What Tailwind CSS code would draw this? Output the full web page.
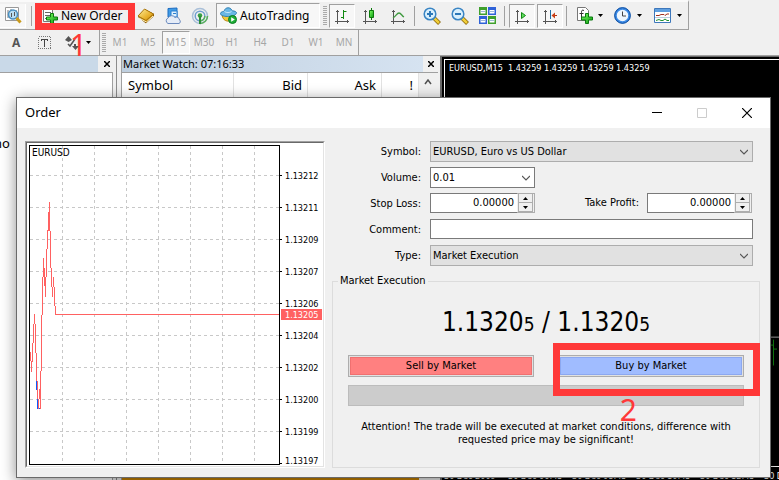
<!DOCTYPE html>
<html lang="en">
<head>
<meta charset="utf-8">
<title>Order</title>
<script src="https://cdn.jsdelivr.net/npm/@tailwindcss/browser@4"></script>
</head>
<body class="relative flex h-screen flex-col overflow-hidden bg-[#f0f0f0] font-['Noto_Sans','Open_Sans',sans-serif] text-[11px] text-black">

<svg class="absolute size-0" aria-hidden="true">
  <defs>
    <symbol id="axes" viewBox="0 0 16 16"><path d="M3.500 2v14M1 13.500h14M2 3.500h3M13.500 12v3" stroke="#555" fill="none"/></symbol>
    <symbol id="drop" viewBox="0 0 5 3"><path d="M0 0h5L2.500 3z"/></symbol>
    <linearGradient id="gold" x1="0" y1="0" x2="1" y2="1"><stop offset="0" stop-color="#fff0a0"/><stop offset=".6" stop-color="#e9b32e"/><stop offset="1" stop-color="#c98a10"/></linearGradient>
    <linearGradient id="green" x1="0" y1="0" x2="1" y2="1"><stop offset="0" stop-color="#7dff60"/><stop offset="1" stop-color="#0a9a12"/></linearGradient>
  </defs>
</svg>

<header>
  <nav aria-label="Main toolbar" class="flex h-[30px] w-[689px] items-center border-t-2 border-r border-b border-t-[#fafafa] border-r-[#a0a0a0] border-b-[#a0a0a0]">
    <button aria-label="Data window" class="flex h-6 w-[26px] items-center justify-center border-r border-b border-white bg-[#f7f7f7]">
      <svg class="size-[18px]" viewBox="0 0 18 18"><path d="M1.500 1.500h13v13h-13z" fill="#fff" stroke="#999"/><path d="M4 4v8M7 3v3M12 4v3" stroke="#777"/><circle cx="9" cy="8.500" r="4.500" fill="#b9def3" stroke="#4a8fc0" stroke-width="1.500"/><path d="M7.500 7v4M10.500 6v4" stroke="#555"/><path d="m12.500 12 4 4.500" stroke="#c99a1c" stroke-width="3"/></svg>
    </button>
    <span class="ml-[5px] h-5 w-px bg-[#a0a0a0]"></span>
    <button class="relative ml-2 flex h-6 w-[88px] items-center gap-[3px] pl-[2px] text-[12px]">
      <svg class="size-4 shrink-0" viewBox="0 0 16 16"><path d="M1.500 1.500h9v12h-9z" fill="#fff" stroke="#777"/><path d="M1 1.500h10" stroke="#555"/><path d="M3 4.500h6M3 7.500h5M3 10.500h4" stroke="#666"/><path d="M8.500 5.500h3v3.500h4v3h-4v3.500h-3V12h-4V9h4z" fill="url(#green)" stroke="#0a7a10"/></svg>
      <span class="whitespace-nowrap">New Order</span>
      <span class="pointer-events-none absolute -top-px -right-[7px] -left-[5px] h-[27px] border-[7px] border-[#ff3838]"></span>
      <span class="pointer-events-none absolute top-[18px] left-[30px] z-10 text-[30px] text-[#ff3838]">1</span>
    </button>
    <button aria-label="Terminal" class="ml-[9px] size-[18px]"><svg viewBox="0 0 18 18"><path d="m1 9.500 8 6.500 7.500-7v-2l-8-4z" fill="#c98d10" stroke="#8a5a06"/><path d="m2 11 7.500 4 6.500-6" fill="none" stroke="#fff3c0"/><path d="M1 9 7.500 2l9 5L9 13.500z" fill="url(#gold)" stroke="#a8750c"/></svg></button>
    <button aria-label="Cloud" class="ml-[9px] size-[18px]"><svg viewBox="0 0 18 18"><path d="M4 1.500 13 1v9H4z" fill="#3f9be6" stroke="#1d6cc0"/><path d="M7 4h6v6H7z" fill="#dff0fd" stroke="#2b7fd0"/><path d="M9 6.500h3" stroke="#2b7fd0"/><path d="M4 16.500a3 3 0 0 1 0-5.500 4 4 0 0 1 7-.5 3 3 0 0 1 4.500 2.500 2 2 0 0 1-.5 3.500z" fill="#e5ecf7" stroke="#6a89bd"/></svg></button>
    <button aria-label="Signals" class="ml-[9px] size-[18px]"><svg viewBox="0 0 18 18" fill="none"><circle cx="9" cy="9" r="7.500" stroke="#a9bfd8" stroke-width="1.500"/><circle cx="9" cy="9" r="4.800" stroke="#6f9fd0" stroke-width="1.500"/><path d="M9 16.500A7.500 7.500 0 0 0 16.500 9M9 13.800A4.800 4.800 0 0 0 13.800 9" stroke="#58b05a" stroke-width="1.500"/><circle cx="9" cy="8.500" r="2.300" fill="#39a045"/><path d="M9 9v8" stroke="#2c8c3a" stroke-width="2"/></svg></button>
    <button class="ml-[7px] flex h-[25px] w-[104px] items-center gap-[3px] border border-t-[#a0a0a0] border-r-white border-b-white border-l-[#a0a0a0] bg-[#f7f7f7] pl-[3px] text-[12px]">
      <svg class="size-[17px] shrink-0" viewBox="0 0 17 17"><path d="M2 8c1 8 10 8 13 1z" fill="#f3c93d" stroke="#b88a13"/><path d="M.5 6.500C1 4 4 5 4.500 3.500 5 0 11 0 11.500 3c1 1.500 4 .5 5 2.500 0 3-5 4-8 4s-8-.5-8-3z" fill="#6bb8e6" stroke="#2e7fb4"/><path d="M4.500 4.500c2 1.500 5 1.500 7 0" fill="none" stroke="#c8e8fa"/><circle cx="12.500" cy="12.500" r="4" fill="#1fae38" stroke="#0b7d20"/><path d="M11.200 10.300v4.400l3.600-2.200z" fill="#fff"/></svg>
      <span>AutoTrading</span>
    </button>
    <span class="ml-[3px] h-5 w-1 bg-[repeating-linear-gradient(#aaa_0_1px,#f0f0f0_1px_2px)]"></span>
    <button aria-label="Bar chart" class="ml-[2px] flex h-6 w-[26px] items-center justify-center border border-t-[#a0a0a0] border-r-white border-b-white border-l-[#a0a0a0] bg-[#f7f7f7]"><svg class="size-4" viewBox="0 0 16 16"><use href="#axes"/><path d="M9.500 2v9M7 9.500h2M10 3.500h2.500" stroke="#128a12"/></svg></button>
    <button aria-label="Candlesticks" class="ml-[7px] size-4"><svg viewBox="0 0 16 16"><use href="#axes"/><path d="M9.500 0v12" stroke="#0a7a0a"/><path d="M7.500 2.500h4v7h-4z" fill="url(#green)" stroke="#0a7a0a"/></svg></button>
    <button aria-label="Line chart" class="ml-3 size-4"><svg viewBox="0 0 16 16"><use href="#axes"/><path d="M3 10c3-2 4-5 6-5s3 3 5 4" fill="none" stroke="#3f9a3f" stroke-width="1.300"/></svg></button>
    <span class="ml-[8px] h-5 w-px bg-[#a0a0a0]"></span>
    <button aria-label="Zoom in" class="ml-2 size-[18px]"><svg viewBox="0 0 18 18"><path d="m11 11 5.500 5.500" stroke="#8a6508" stroke-width="4"/><path d="m11 11 5 5" stroke="#f0cf3a" stroke-width="2.500"/><circle cx="7" cy="7" r="5.800" fill="#d9f0fd" stroke="#3a85c4" stroke-width="1.500"/><path d="M7 4v6M4 7h6" stroke="#2c78b8" stroke-width="2"/></svg></button>
    <button aria-label="Zoom out" class="ml-[10px] size-[18px]"><svg viewBox="0 0 18 18"><path d="m11 11 5.500 5.500" stroke="#8a6508" stroke-width="4"/><path d="m11 11 5 5" stroke="#f0cf3a" stroke-width="2.500"/><circle cx="7" cy="7" r="5.800" fill="#d9f0fd" stroke="#3a85c4" stroke-width="1.500"/><path d="M4 7h6" stroke="#2c78b8" stroke-width="2"/></svg></button>
    <button aria-label="Tile windows" class="ml-[10px] size-[17px]"><svg viewBox="0 0 17 17"><path d="M0 0h8v8H0z" fill="#3fa02c"/><path d="M9 0h8v8H9z" fill="#2f62d8"/><path d="M0 9h8v8H0z" fill="#2f62d8"/><path d="M9 9h8v8H9z" fill="#3fa02c"/><path d="M1.500 3h5v3.500h-5zM10.500 3h5v3.500h-5zM1.500 12h5v3.500h-5zM10.500 12h5v3.500h-5z" fill="#fff"/><path d="M2 4.500h4M11 4.500h4M2 13.500h4M11 13.500h4" stroke="#9fb8d8"/></svg></button>
    <span class="ml-[8px] h-5 w-px bg-[#a0a0a0]"></span>
    <button aria-label="Auto scroll" class="ml-1 flex h-6 w-[26px] items-center justify-center border border-t-[#a0a0a0] border-r-white border-b-white border-l-[#a0a0a0] bg-[#f7f7f7]"><svg class="size-4" viewBox="0 0 16 16"><use href="#axes"/><path d="M7.500 4.500v6l4-3z" fill="#5fdc5f" stroke="#128a12"/></svg></button>
    <button aria-label="Chart shift" class="ml-[2px] flex h-6 w-[26px] items-center justify-center border border-t-[#a0a0a0] border-r-white border-b-white border-l-[#a0a0a0] bg-[#f7f7f7]"><svg class="size-4" viewBox="0 0 16 16"><use href="#axes"/><path d="M8.500 2v9" stroke="#1a6fa8"/><path d="M10 7.500h5" stroke="#b03010"/><path d="m9.500 7.500 3.500-3v6z" fill="#c84018"/></svg></button>
    <span class="ml-[3px] h-5 w-px bg-[#a0a0a0]"></span>
    <button aria-label="Indicators" class="ml-[9px] flex items-center gap-[5px]"><svg class="size-[17px]" viewBox="0 0 17 17"><path d="M1.500.5h8l3 3v10h-11z" fill="#fff" stroke="#777"/><path d="M8 3.500c-2-1-2.500 0-2.500 2V11M3.500 6.500h4" fill="none" stroke="#333"/><path d="M9.500 6.500h3v3.500h4v3h-4v3.500h-3V13h-4v-3h4z" fill="url(#green)" stroke="#0a7a10"/></svg><svg class="h-[3px] w-[5px]"><use href="#drop"/></svg></button>
    <button aria-label="Periods" class="ml-[11px] flex items-center gap-[6px]"><svg class="size-[17px]" viewBox="0 0 17 17"><circle cx="8.500" cy="8.500" r="7" fill="#eef6fd" stroke="#3b8ae6" stroke-width="2.500"/><circle cx="8.500" cy="8.500" r="7.800" fill="none" stroke="#134f9c"/><path d="M8.500 4.500v4.500h3.500" fill="none" stroke="#444"/></svg><svg class="h-[3px] w-[5px]"><use href="#drop"/></svg></button>
    <button aria-label="Templates" class="ml-[12px] flex items-center gap-[6px]"><svg class="h-[15px] w-[17px]" viewBox="0 0 17 15"><path d="M.5.5h16v14H.5z" fill="#fff" stroke="#3d77bb"/><path d="M1 1h15v3H1z" fill="#5f9fe0"/><path d="M2 7.500h3l2-1h3l1 1 2-1.500h2" fill="none" stroke="#a03020"/><path d="M1 9.500h15" stroke="#bcd"/><path d="m2 12.500 3-1 2 1h2l2-1.500 2 1.500h2" fill="none" stroke="#209030"/></svg><svg class="h-[3px] w-[5px]"><use href="#drop"/></svg></button>
  </nav>
  <nav aria-label="Timeframes" class="flex h-[26px] items-center border-b border-[#a0a0a0] text-[10px] text-[#a6a6a6]">
    <div class="flex h-full w-[100px] items-center border-r border-[#a0a0a0]">
      <button class="ml-3 text-[12px] font-bold text-[#555]">A</button>
      <button aria-label="Text label" class="ml-[18px] size-[13px]"><svg viewBox="0 0 13 13" shape-rendering="crispEdges"><rect x=".5" y=".5" width="12" height="12" fill="none" stroke="#777" stroke-dasharray="1 1"/><path d="M3 3.500h7M6.500 3v8M3.500 3v2M9.500 3v2" stroke="#444" fill="none"/></svg></button>
      <button aria-label="Arrows" class="ml-[14px] flex items-center gap-[7px] text-black"><svg class="size-[14px]" viewBox="0 0 14 14"><path d="m0 4 3.500-4L7 4 3.500 6zM7 10h2V8h2v2h3l-3.500 4z" fill="#555"/><path d="m3 8 2 2 5-7" fill="none" stroke="#555" stroke-width="1.500"/></svg><svg class="h-[3px] w-[5px]"><use href="#drop"/></svg></button>
    </div>
    <span class="ml-[2px] h-5 w-1 bg-[repeating-linear-gradient(#aaa_0_1px,#f0f0f0_1px_2px)]"></span>
    <div class="flex h-full items-center border-r border-[#a0a0a0]">
      <button class="h-[23px] w-7">M1</button><button class="h-[23px] w-7">M5</button><button class="h-[23px] w-7 border border-t-[#a0a0a0] border-r-white border-b-white border-l-[#a0a0a0] bg-[#f7f7f7]">M15</button><button class="h-[23px] w-7">M30</button><button class="h-[23px] w-7">H1</button><button class="h-[23px] w-7">H4</button><button class="h-[23px] w-7">D1</button><button class="h-[23px] w-7">W1</button><button class="h-[23px] w-7">MN</button>
    </div>
  </nav>
</header>

<main class="flex min-h-0 flex-1">
  <aside class="flex w-[117px] flex-col border-r border-[#8c8c8c]">
    <div class="flex h-4 items-center bg-[#c9d9e8]">
      <span class="flex-1"></span>
      <button aria-label="Close navigator" class="flex h-full w-[18px] items-center justify-center bg-[#f0f0f0]"><svg class="size-[6px]" viewBox="0 0 6 6"><path d="m0 0 6 6M6 0 0 6" stroke="#000" stroke-width="1.500"/></svg></button>
    </div>
    <div class="mr-[3px] flex-1 border-t border-r border-[#a0a0a0] bg-white pt-[61px] text-[13px]"><span class="-ml-[6px]">no</span></div>
  </aside>
  <section aria-label="Market Watch" class="ml-1 flex w-[317px] flex-col border-l border-[#a0a0a0]">
    <div class="flex h-4 items-center bg-linear-to-r from-[#bfcfdf] to-[#d7e4f2]">
      <h2 class="flex-1 pl-px text-[11px] leading-4">Market Watch: 07:16:33</h2>
      <button aria-label="Close market watch" class="flex h-full w-[15px] items-center justify-center bg-[#f0f0f0]"><svg class="size-[6px]" viewBox="0 0 6 6"><path d="m0 0 6 6M6 0 0 6" stroke="#000" stroke-width="1.500"/></svg></button>
    </div>
    <div class="flex flex-1 border-t border-[#a0a0a0]">
      <div class="flex-1 bg-[#c98300]">
        <table class="w-full table-fixed border-collapse bg-white text-[13px] leading-6">
          <thead><tr class="h-6">
            <th class="border-r border-[#e2e2e2] pl-[6px] text-left font-normal">Symbol</th>
            <th class="w-[74px] border-r border-[#e2e2e2] pr-[5px] text-right font-normal">Bid</th>
            <th class="w-[74px] border-r border-[#e2e2e2] pr-[5px] text-right font-normal">Ask</th>
            <th class="w-[37px] border-r border-[#e2e2e2] pr-[5px] text-right font-normal">!</th>
          </tr></thead>
        </table>
      </div>
      <div class="w-[19px] bg-[#f0f0f0] pt-[6px]"><svg class="ml-[5px] h-[6px] w-2" viewBox="0 0 8 6"><path d="m1 5 3-4 3 4" fill="none" stroke="#505050" stroke-width="1.500"/></svg></div>
    </div>
  </section>
  <section aria-label="EURUSD chart" class="ml-[2px] flex min-w-0 flex-1 flex-col border-t border-l-2 border-[#696969] bg-black pt-[2px] pl-[2px] font-['DejaVu_Sans_Condensed','DejaVu_Sans',sans-serif] text-[9px] text-white">
    <div class="relative h-[408px] border-y border-l border-white px-1">
      <p class="leading-[16px] whitespace-pre">EURUSD,M15  1.43259 1.43259 1.43259 1.43259</p>
      <svg class="absolute top-0 right-0 h-full w-[9px]" viewBox="0 0 9 408"><path d="M0 278.500h9" stroke="#aaa"/><path d="M3.500 281v26M1 286.500h2M4 290.500h3" stroke="#128a12"/></svg>
    </div>
    <div class="flex h-[13px] overflow-hidden pt-[5px] leading-[9px] whitespace-nowrap">
      <span class="w-16 shrink-0">30 Dec 2009</span><span class="w-16 shrink-0">30 Dec 06:45</span><span class="w-16 shrink-0">30 Dec 08:45</span><span class="w-16 shrink-0">30 Dec 10:45</span><span class="w-16 shrink-0">30 Dec 12:45</span><span class="w-16 shrink-0">30 Dec 14:45</span>
    </div>
  </section>
</main>

<div role="dialog" aria-labelledby="dlg" class="absolute top-[97px] right-2 left-4 z-20 border border-[#6a6a6a] bg-[#f0f0f0] shadow-[0_3px_14px_rgba(0,0,0,0.45)]">
  <div class="flex h-[30px] items-center bg-white pl-2">
    <h1 id="dlg" class="flex-1 text-[13px]">Order</h1>
    <button aria-label="Minimize" class="flex w-[45px] justify-center"><svg class="size-[10px]" viewBox="0 0 10 10"><path d="M0 4.500h10" stroke="#000"/></svg></button>
    <button aria-label="Maximize" disabled class="flex w-[45px] justify-center"><svg class="size-[10px]" viewBox="0 0 10 10"><path d="M.5.5h9v9h-9z" fill="none" stroke="#ccc"/></svg></button>
    <button aria-label="Close" class="flex w-[46px] justify-center"><svg class="size-[10px]" viewBox="0 0 10 10"><path d="m0 0 10 10M10 0 0 10" stroke="#000" stroke-width="1.200"/></svg></button>
  </div>
  <div class="flex gap-[7px] pt-[13px] pr-[10px] pb-[9px] pl-2">
    <div class="h-[327px] w-[300px] shrink-0 border border-t-[#a0a0a0] border-r-white border-b-white border-l-[#a0a0a0]">
      <div class="h-full border border-t-[#696969] border-r-[#e3e3e3] border-b-[#e3e3e3] border-l-[#696969] bg-white">
        <svg class="h-full w-full font-['DejaVu_Sans_Condensed','DejaVu_Sans',sans-serif]" viewBox="27 143 296 323" role="img" aria-label="EURUSD tick chart">
          <g shape-rendering="crispEdges" fill="none">
            <path d="M62.500 146v318M94.500 146v318M126.500 146v318M158.500 146v318M190.500 146v318M222.500 146v318M254.500 146v318M30 175.500h249M30 207.500h249M30 239.500h249M30 271.500h249M30 303.500h249M30 335.500h249M30 367.500h249M30 399.500h249M30 431.500h249" stroke="#c8c8c8" stroke-dasharray="3 3"/>
            <path d="M279 175.500h3M279 207.500h3M279 239.500h3M279 271.500h3M279 303.500h3M279 335.500h3M279 367.500h3M279 399.500h3M279 431.500h3M279 463.500h3" stroke="#000"/>
            <path d="M30.500 352v9M31.500 361v11M32.500 343v19M33.500 324v19M34.500 314v10M35.500 324v29M36.500 353v28M37.500 381v18M38.500 399v10M39.500 389v10M40.500 371v38M41.500 315v56M42.500 277v38M43.500 258v19M44.500 268v18M45.500 277v20M46.500 249v28M47.500 230v19M48.500 212v19M49.500 202v29M50.500 231v37M51.500 268v19M52.500 287v10M53.500 277v10M54.500 287v19M55.500 306v9M56 314.500h223" stroke="#ff6161"/>
            <path d="M36.500 381v9M37.500 399v10M39 408.500h1" stroke="#0a5cff"/>
            <path d="M29.500 145.500h250v319h-250z" stroke="#000"/>
          </g>
          <text x="32" y="156" font-size="10">EURUSD</text>
          <rect x="281" y="309" width="41" height="11" fill="#ff6161"/>
          <g font-size="9">
            <text x="285" y="179">1.13212</text><text x="285" y="211">1.13211</text><text x="285" y="243">1.13209</text><text x="285" y="275">1.13207</text><text x="285" y="307">1.13206</text><text x="285" y="318" fill="#fff">1.13205</text><text x="285" y="339">1.13204</text><text x="285" y="371">1.13202</text><text x="285" y="403">1.13200</text><text x="285" y="435">1.13199</text><text x="285" y="464">1.13197</text>
          </g>
        </svg>
      </div>
    </div>
    <form class="flex min-w-0 flex-1 flex-col font-['DejaVu_Sans_Condensed','DejaVu_Sans',sans-serif]">
      <div class="grid grid-cols-[89px_1fr] items-center gap-x-[9px] gap-y-[5px] pr-[7px] [&>label]:pt-[2px] [&>label]:text-right">
        <label for="symbol">Symbol:</label>
        <div class="relative"><select id="symbol" class="h-[21px] w-full appearance-none border border-[#adadad] bg-[#e1e1e1] pt-[2px] pl-[2px]"><option>EURUSD, Euro vs US Dollar</option></select><svg class="pointer-events-none absolute top-2 right-[5px] h-[6px] w-2" viewBox="0 0 8 6"><path d="m0 1 4 4 4-4" fill="none" stroke="#555" stroke-width="1.200"/></svg></div>
        <label for="volume">Volume:</label>
        <div class="relative w-[105px]"><select id="volume" class="h-[21px] w-full appearance-none border border-[#7a7a7a] bg-white pt-[2px] pl-[2px]"><option>0.01</option></select><svg class="pointer-events-none absolute top-2 right-[5px] h-[6px] w-2" viewBox="0 0 8 6"><path d="m0 1 4 4 4-4" fill="none" stroke="#555" stroke-width="1.200"/></svg></div>
        <label for="sl">Stop Loss:</label>
        <div class="flex h-[21px] items-start justify-between">
          <div class="flex h-5 w-[105px]"><input id="sl" value="0.00000" class="w-[87px] border border-r-0 border-[#7a7a7a] bg-white pt-px pr-[3px] text-right"><span class="flex flex-1 flex-col border border-l-0 border-[#adadad] bg-[#f0f0f0] pr-px pl-px"><button type="button" aria-label="Increase stop loss" class="flex flex-1 items-center justify-center border border-t-0 border-[#adadad]"><svg class="h-[3px] w-[5px] rotate-180"><use href="#drop"/></svg></button><button type="button" aria-label="Decrease stop loss" class="flex flex-1 items-center justify-center border border-t-0 border-[#adadad]"><svg class="h-[3px] w-[5px]"><use href="#drop"/></svg></button></span></div>
          <div class="flex items-center gap-2 pr-px"><label for="tp" class="pt-px">Take Profit:</label>
          <div class="flex h-5 w-[105px]"><input id="tp" value="0.00000" class="w-[87px] border border-r-0 border-[#7a7a7a] bg-white pt-px pr-[3px] text-right"><span class="flex flex-1 flex-col border border-l-0 border-[#adadad] bg-[#f0f0f0] pr-px pl-px"><button type="button" aria-label="Increase take profit" class="flex flex-1 items-center justify-center border border-t-0 border-[#adadad]"><svg class="h-[3px] w-[5px] rotate-180"><use href="#drop"/></svg></button><button type="button" aria-label="Decrease take profit" class="flex flex-1 items-center justify-center border border-t-0 border-[#adadad]"><svg class="h-[3px] w-[5px]"><use href="#drop"/></svg></button></span></div></div>
        </div>
        <label for="comment">Comment:</label>
        <div class="flex h-[21px]"><input id="comment" class="h-5 w-full border border-[#7a7a7a] bg-white px-1"></div>
        <label for="type">Type:</label>
        <div class="relative"><select id="type" class="h-[21px] w-full appearance-none border border-[#adadad] bg-[#e1e1e1] pt-[2px] pl-[2px]"><option>Market Execution</option></select><svg class="pointer-events-none absolute top-2 right-[5px] h-[6px] w-2" viewBox="0 0 8 6"><path d="m0 1 4 4 4-4" fill="none" stroke="#555" stroke-width="1.200"/></svg></div>
      </div>
      <fieldset class="mt-2 flex-1 border border-[#dcdcdc] px-[15px]">
        <legend class="-ml-[10px] px-[2px] leading-[14px]">Market Execution</legend>
        <p class="mt-[18px] text-center text-[26px] leading-8">1.1320<span class="text-[19px]">5</span> / 1.1320<span class="text-[19px]">5</span></p>
        <div class="relative mt-[15px] grid grid-cols-2 gap-6">
          <button type="button" class="h-[22px] border border-[#adadad] bg-[#e1e1e1] p-px"><span class="flex h-full items-center justify-center border border-[#f07070] bg-[#ff8080]">Sell by Market</span></button>
          <button type="button" class="h-[22px] border border-[#adadad] bg-[#e1e1e1] p-px"><span class="flex h-full items-center justify-center border border-[#8ca8f0] bg-[#a0bcff]">Buy by Market</span></button>
          <span class="pointer-events-none absolute -top-3 -right-4 z-10 h-[53px] w-[207px] border-[7px] border-[#ff3838]"></span>
          <span class="pointer-events-none absolute top-8 right-[107px] z-10 font-['Noto_Sans',sans-serif] text-[30px] text-[#ff3838]">2</span>
        </div>
        <div class="mt-2 h-[21px] border border-[#bcbcbc] bg-[#ccc]"></div>
        <p class="mt-[14px] text-center leading-[13px]">Attention! The trade will be executed at market conditions, difference with requested price may be significant!</p>
      </fieldset>
    </form>
  </div>
</div>
</body>
</html>
